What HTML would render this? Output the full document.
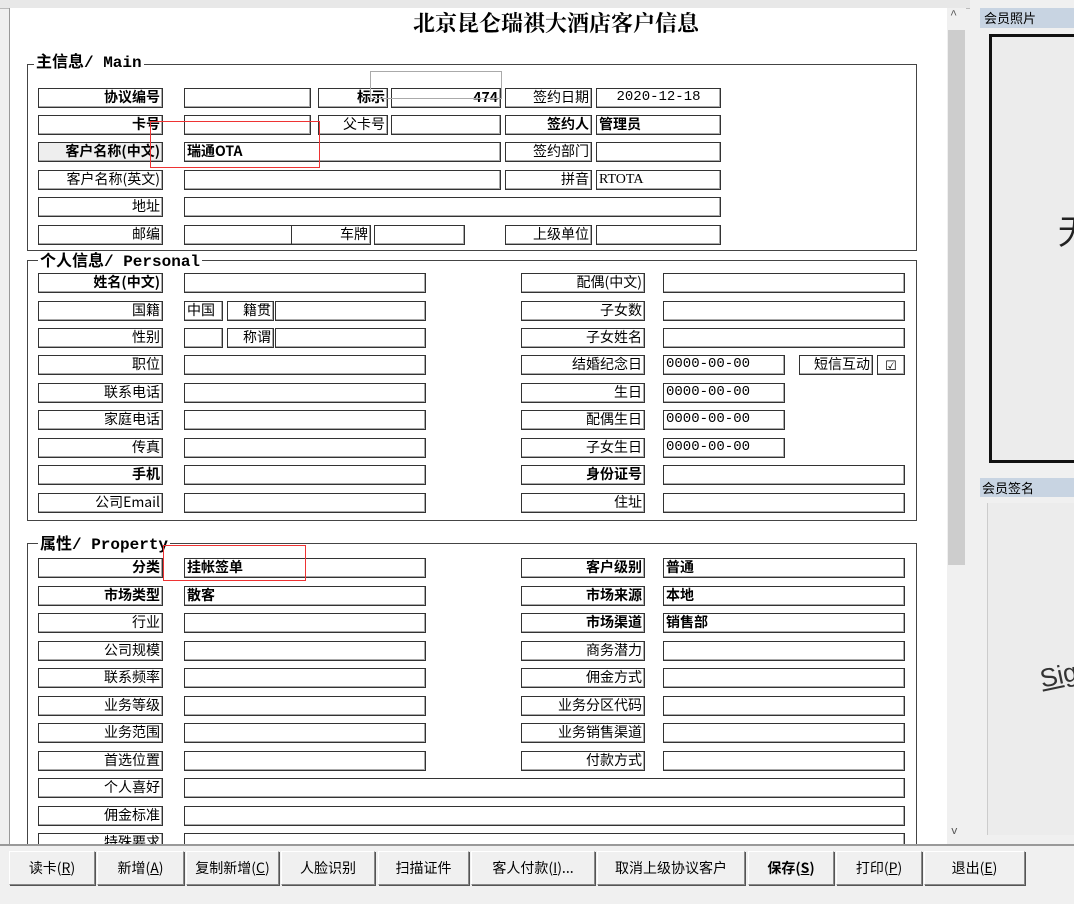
<!DOCTYPE html>
<html><head><meta charset="utf-8"><style>
body{margin:0;width:1074px;height:902px;background:#f0f0f0;position:relative;overflow:hidden;font-family:"Liberation Mono","Noto Sans CJK SC",monospace;}
.a{position:absolute}
.b{position:absolute;box-sizing:border-box;border:1px solid #333;box-shadow:inset -1px -1px 0 #aaa;height:20px;font-size:14px;line-height:17px;background:#fff;white-space:nowrap;overflow:hidden;color:#000;font-family:"Noto Sans CJK SC",sans-serif}
.l{text-align:right;padding-right:2px}
.v{padding-left:2px}
.k{font-weight:bold}
.f{position:absolute;box-sizing:border-box;border:1px solid #444}
.lg{position:absolute;background:#fff;font-weight:bold;font-size:16px;line-height:18px;padding:0 2px;font-family:"Liberation Mono","Noto Sans CJK SC",monospace}
.r{position:absolute;border:1px solid #e33;box-sizing:border-box}
.btn{position:absolute;top:851px;height:34px;box-sizing:border-box;border:1px solid #888;border-top-color:#fff;border-left-color:#fff;box-shadow:1px 1px 0 #555;background:#f0f0f0;font-size:14px;line-height:32px;text-align:center;font-family:"Noto Sans CJK SC",sans-serif}
</style></head><body>
<div class="a" style="left:0;top:0;width:970px;height:8px;background:#e8e8e8;border-bottom:1px solid #bbb"></div>
<div class="a" style="left:9px;top:8px;width:938px;height:836px;background:#fff;border-left:1px solid #999"></div>
<!-- scrollbar -->
<div class="a" style="left:947px;top:8px;width:19px;height:836px;background:#f0f0f0"></div>
<div class="a" style="left:948px;top:30px;width:17px;height:535px;background:#cdcdcd"></div>
<div class="a" style="left:950px;top:8px;font-size:12px;color:#555">^</div>
<div class="a" style="left:951px;top:826px;font-size:11px;color:#555">v</div>
<div class="a" style="left:0;top:844px;width:1074px;height:2px;background:#999"></div>
<div class="a" style="left:0;top:0;width:1074px;text-align:center;"></div>
<div class="a" style="left:340px;top:8px;width:432px;text-align:center;font-size:22px;font-weight:bold;font-family:'Noto Serif CJK SC',serif;line-height:30px">北京昆仑瑞祺大酒店客户信息</div>

<!-- Main frame -->
<div class="f" style="left:27px;top:64px;width:890px;height:187px"></div>
<div class="lg" style="left:34px;top:54px">主信息/ Main</div>
<div class="b l k" style="left:38px;top:88px;width:125px">协议编号</div>
<div class="b" style="left:184px;top:88px;width:127px"></div>
<div class="b l k" style="left:318px;top:88px;width:70px">标示</div>
<div class="b l k" style="left:391px;top:88px;width:110px">474</div>
<div class="b l" style="left:505px;top:88px;width:87px">签约日期</div>
<div class="b" style="left:596px;top:88px;width:125px;text-align:center;font-family:'Liberation Mono',monospace">2020-12-18</div>

<div class="b l k" style="left:38px;top:115px;width:125px">卡号</div>
<div class="b" style="left:184px;top:115px;width:127px"></div>
<div class="b l" style="left:318px;top:115px;width:70px">父卡号</div>
<div class="b" style="left:391px;top:115px;width:110px"></div>
<div class="b l k" style="left:505px;top:115px;width:87px">签约人</div>
<div class="b v k" style="left:596px;top:115px;width:125px">管理员</div>

<div class="b l k" style="left:38px;top:142px;width:125px;background:#eee">客户名称(中文)</div>
<div class="b v k" style="left:184px;top:142px;width:317px">瑞通OTA</div>
<div class="b l" style="left:505px;top:142px;width:87px">签约部门</div>
<div class="b" style="left:596px;top:142px;width:125px"></div>

<div class="b l" style="left:38px;top:170px;width:125px">客户名称(英文)</div>
<div class="b" style="left:184px;top:170px;width:317px"></div>
<div class="b l" style="left:505px;top:170px;width:87px">拼音</div>
<div class="b v" style="left:596px;top:170px;width:125px;font-family:'Liberation Serif',serif">RTOTA</div>

<div class="b l" style="left:38px;top:197px;width:125px">地址</div>
<div class="b" style="left:184px;top:197px;width:537px"></div>

<div class="b l" style="left:38px;top:225px;width:125px">邮编</div>
<div class="b" style="left:184px;top:225px;width:111px"></div>
<div class="b l" style="left:291px;top:225px;width:80px">车牌</div>
<div class="b" style="left:374px;top:225px;width:91px"></div>
<div class="b l" style="left:505px;top:225px;width:87px">上级单位</div>
<div class="b" style="left:596px;top:225px;width:125px"></div>

<div class="r" style="left:370px;top:71px;width:132px;height:28px;border-color:#aaa"></div>
<div class="r" style="left:150px;top:121px;width:170px;height:47px"></div>

<!-- Personal -->
<div class="f" style="left:27px;top:260px;width:890px;height:261px"></div>
<div class="lg" style="left:38px;top:253px">个人信息/ Personal</div>
<div class="b l k" style="left:38px;top:273px;width:125px">姓名(中文)</div>
<div class="b" style="left:184px;top:273px;width:242px"></div>
<div class="b l" style="left:38px;top:301px;width:125px">国籍</div>
<div class="b v" style="left:184px;top:301px;width:39px">中国</div>
<div class="b l" style="left:227px;top:301px;width:47px">籍贯</div>
<div class="b" style="left:275px;top:301px;width:151px"></div>
<div class="b l" style="left:38px;top:328px;width:125px">性别</div>
<div class="b" style="left:184px;top:328px;width:39px"></div>
<div class="b l" style="left:227px;top:328px;width:47px">称谓</div>
<div class="b" style="left:275px;top:328px;width:151px"></div>
<div class="b l" style="left:38px;top:355px;width:125px">职位</div>
<div class="b" style="left:184px;top:355px;width:242px"></div>
<div class="b l" style="left:38px;top:383px;width:125px">联系电话</div>
<div class="b" style="left:184px;top:383px;width:242px"></div>
<div class="b l" style="left:38px;top:410px;width:125px">家庭电话</div>
<div class="b" style="left:184px;top:410px;width:242px"></div>
<div class="b l" style="left:38px;top:438px;width:125px">传真</div>
<div class="b" style="left:184px;top:438px;width:242px"></div>
<div class="b l k" style="left:38px;top:465px;width:125px">手机</div>
<div class="b" style="left:184px;top:465px;width:242px"></div>
<div class="b l" style="left:38px;top:493px;width:125px">公司Email</div>
<div class="b" style="left:184px;top:493px;width:242px"></div>

<div class="b l" style="left:521px;top:273px;width:124px">配偶(中文)</div>
<div class="b" style="left:663px;top:273px;width:242px"></div>
<div class="b l" style="left:521px;top:301px;width:124px">子女数</div>
<div class="b" style="left:663px;top:301px;width:242px"></div>
<div class="b l" style="left:521px;top:328px;width:124px">子女姓名</div>
<div class="b" style="left:663px;top:328px;width:242px"></div>
<div class="b l" style="left:521px;top:355px;width:124px">结婚纪念日</div>
<div class="b v" style="left:663px;top:355px;width:122px;font-family:'Liberation Mono',monospace">0000-00-00</div>
<div class="b l" style="left:799px;top:355px;width:74px">短信互动</div>
<div class="b" style="left:877px;top:355px;width:28px;text-align:center;font-size:13px">☑</div>
<div class="b l" style="left:521px;top:383px;width:124px">生日</div>
<div class="b v" style="left:663px;top:383px;width:122px;font-family:'Liberation Mono',monospace">0000-00-00</div>
<div class="b l" style="left:521px;top:410px;width:124px">配偶生日</div>
<div class="b v" style="left:663px;top:410px;width:122px;font-family:'Liberation Mono',monospace">0000-00-00</div>
<div class="b l" style="left:521px;top:438px;width:124px">子女生日</div>
<div class="b v" style="left:663px;top:438px;width:122px;font-family:'Liberation Mono',monospace">0000-00-00</div>
<div class="b l k" style="left:521px;top:465px;width:124px">身份证号</div>
<div class="b" style="left:663px;top:465px;width:242px"></div>
<div class="b l" style="left:521px;top:493px;width:124px">住址</div>
<div class="b" style="left:663px;top:493px;width:242px"></div>

<!-- Property -->
<div class="f" style="left:27px;top:543px;width:890px;height:320px"></div>
<div class="lg" style="left:38px;top:536px">属性/ Property</div>
<div class="b l k" style="left:38px;top:558px;width:125px">分类</div>
<div class="b v k" style="left:184px;top:558px;width:242px">挂帐签单</div>
<div class="b l k" style="left:38px;top:586px;width:125px">市场类型</div>
<div class="b v k" style="left:184px;top:586px;width:242px">散客</div>
<div class="b l" style="left:38px;top:613px;width:125px">行业</div>
<div class="b" style="left:184px;top:613px;width:242px"></div>
<div class="b l" style="left:38px;top:641px;width:125px">公司规模</div>
<div class="b" style="left:184px;top:641px;width:242px"></div>
<div class="b l" style="left:38px;top:668px;width:125px">联系频率</div>
<div class="b" style="left:184px;top:668px;width:242px"></div>
<div class="b l" style="left:38px;top:696px;width:125px">业务等级</div>
<div class="b" style="left:184px;top:696px;width:242px"></div>
<div class="b l" style="left:38px;top:723px;width:125px">业务范围</div>
<div class="b" style="left:184px;top:723px;width:242px"></div>
<div class="b l" style="left:38px;top:751px;width:125px">首选位置</div>
<div class="b" style="left:184px;top:751px;width:242px"></div>
<div class="b l" style="left:38px;top:778px;width:125px">个人喜好</div>
<div class="b" style="left:184px;top:778px;width:721px"></div>
<div class="b l" style="left:38px;top:806px;width:125px">佣金标准</div>
<div class="b" style="left:184px;top:806px;width:721px"></div>
<div class="b l" style="left:38px;top:833px;width:125px">特殊要求</div>
<div class="b" style="left:184px;top:833px;width:721px"></div>

<div class="b l k" style="left:521px;top:558px;width:124px">客户级别</div>
<div class="b v k" style="left:663px;top:558px;width:242px">普通</div>
<div class="b l k" style="left:521px;top:586px;width:124px">市场来源</div>
<div class="b v k" style="left:663px;top:586px;width:242px">本地</div>
<div class="b l k" style="left:521px;top:613px;width:124px">市场渠道</div>
<div class="b v k" style="left:663px;top:613px;width:242px">销售部</div>
<div class="b l" style="left:521px;top:641px;width:124px">商务潜力</div>
<div class="b" style="left:663px;top:641px;width:242px"></div>
<div class="b l" style="left:521px;top:668px;width:124px">佣金方式</div>
<div class="b" style="left:663px;top:668px;width:242px"></div>
<div class="b l" style="left:521px;top:696px;width:124px">业务分区代码</div>
<div class="b" style="left:663px;top:696px;width:242px"></div>
<div class="b l" style="left:521px;top:723px;width:124px">业务销售渠道</div>
<div class="b" style="left:663px;top:723px;width:242px"></div>
<div class="b l" style="left:521px;top:751px;width:124px">付款方式</div>
<div class="b" style="left:663px;top:751px;width:242px"></div>
<div class="r" style="left:163px;top:545px;width:143px;height:36px"></div>
<!-- cover clipped area -->
<div class="a" style="left:0;top:844px;width:1074px;height:58px;background:#f0f0f0;border-top:2px solid #999"></div>

<!-- Right panel -->
<div class="a" style="left:980px;top:8px;width:94px;height:20px;background:#c8d4e2;font-size:13px;line-height:20px;padding-left:4px;font-family:'Noto Sans CJK SC',sans-serif">会员照片</div>
<div class="a" style="left:989px;top:34px;width:85px;height:429px;box-sizing:border-box;border:3px solid #111;border-right:none;background:#ececec"></div>
<div class="a" style="left:1058px;top:205px;font-size:34px;color:#222;font-family:'Noto Sans CJK SC',sans-serif">无</div>
<div class="a" style="left:980px;top:478px;width:94px;height:19px;background:#c8d4e2;font-size:13px;line-height:19px;padding-left:2px;font-family:'Noto Sans CJK SC',sans-serif">会员签名</div>
<div class="a" style="left:987px;top:503px;width:87px;height:332px;background:#ececec;border-left:1px solid #ccc"></div>
<div class="a" style="left:1040px;top:660px;font-size:26px;color:#333;transform:rotate(-12deg);text-decoration:underline;font-family:'Liberation Sans',sans-serif">Sig</div>

<!-- Buttons -->
<div class="btn" style="left:9px;width:86px">读卡(<u>R</u>)</div>
<div class="btn" style="left:97px;width:87px">新增(<u>A</u>)</div>
<div class="btn" style="left:186px;width:93px">复制新增(<u>C</u>)</div>
<div class="btn" style="left:281px;width:94px">人脸识别</div>
<div class="btn" style="left:378px;width:91px">扫描证件</div>
<div class="btn" style="left:471px;width:124px">客人付款(<u>I</u>)...</div>
<div class="btn" style="left:597px;width:148px">取消上级协议客户</div>
<div class="btn" style="left:748px;width:86px;font-weight:bold">保存(<u>S</u>)</div>
<div class="btn" style="left:836px;width:86px">打印(<u>P</u>)</div>
<div class="btn" style="left:924px;width:101px">退出(<u>E</u>)</div>
</body></html>
